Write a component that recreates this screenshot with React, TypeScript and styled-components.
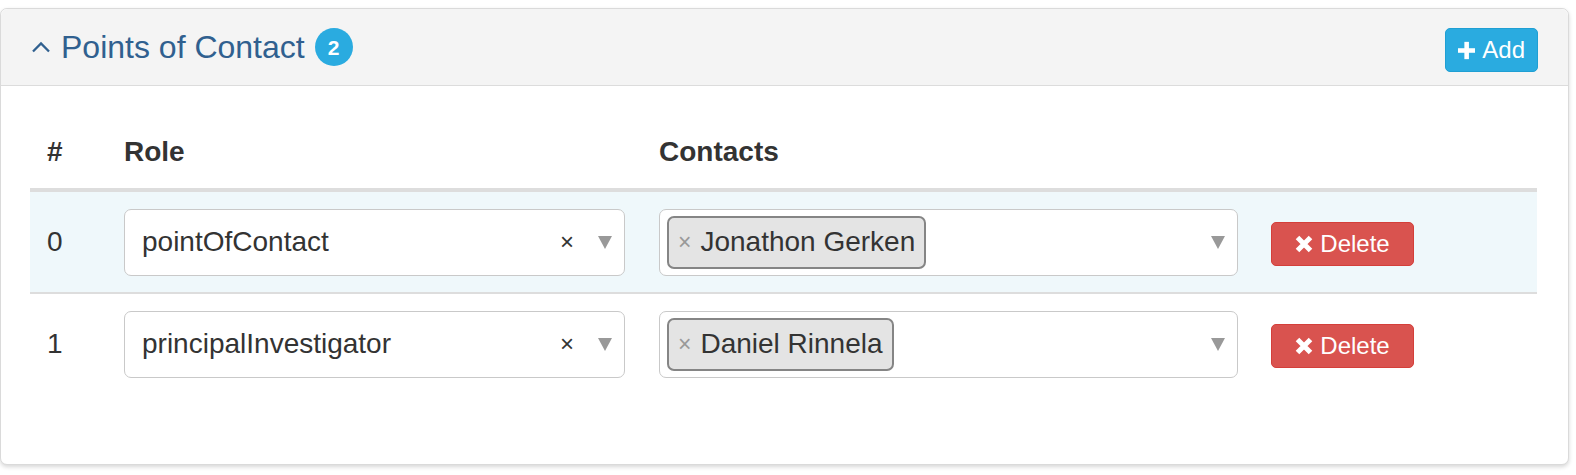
import React from "react";
import styled, { createGlobalStyle } from "styled-components";

const GlobalStyle = createGlobalStyle`
  html, body { margin: 0; padding: 0; background: #ffffff; }
  body { font-family: "Liberation Sans", Arial, Helvetica, sans-serif; color: #333333; }
  * { box-sizing: border-box; }
`;

const Page = styled.div`
  padding: 8px 0 12px 0;
`;

const Panel = styled.section`
  width: 1569px;
  background: #ffffff;
  border: 1px solid #dadada;
  border-radius: 7px;
  box-shadow: 0 2px 4px rgba(0, 0, 0, 0.16);
`;

const Heading = styled.header`
  height: 77px;
  display: flex;
  align-items: center;
  justify-content: space-between;
  padding: 0 30px 0 30px;
  background: #f4f4f4;
  border-bottom: 1px solid #dcdcdc;
  border-radius: 7px 7px 0 0;
`;

const Title = styled.h3`
  margin: 0;
  display: flex;
  align-items: center;
  font-size: 32px;
  font-weight: 400;
  color: #30608f;
  line-height: 1;
`;

const TitleText = styled.span`
  margin-left: 10px;
`;

const Badge = styled.span`
  display: inline-flex;
  align-items: center;
  justify-content: center;
  width: 38px;
  height: 38px;
  margin-left: 10px;
  border-radius: 50%;
  background: #2aabe0;
  color: #ffffff;
  font-size: 21px;
  font-weight: 700;
`;

const Button = styled.button<{ $variant: "info" | "danger" }>`
  display: inline-flex;
  align-items: center;
  justify-content: center;
  gap: 7px;
  height: 44px;
  padding: 0 12px;
  border-radius: 5px;
  font-family: "Liberation Sans", Arial, sans-serif;
  font-size: 24px;
  color: #ffffff;
  cursor: pointer;
  background: ${(p) => (p.$variant === "info" ? "#2aabe0" : "#d9534f")};
  border: 1.5px solid ${(p) => (p.$variant === "info" ? "#1f9fd3" : "#d43f3a")};
`;

const AddButton = styled(Button)`
  width: 93px;
  margin-top: 6px;
`;

const DeleteButton = styled(Button)`
  width: 143px;
  margin-top: 4px;
`;

const Body = styled.div`
  padding: 30px 31px 70px 29px;
`;

const Grid = styled.div`
  display: grid;
  grid-template-columns: 94px 535px 612px 1fr;
`;

const HeadRow = styled(Grid)`
  height: 76px;
  align-items: center;
  border-bottom: 4px solid #dddddd;
`;

const HeadCell = styled.div<{ $pad?: number }>`
  padding-left: ${(p) => p.$pad ?? 0}px;
  font-size: 28px;
  font-weight: 700;
  color: #333333;
`;

const Row = styled(Grid)<{ $striped: boolean; $first: boolean }>`
  height: ${(p) => (p.$first ? 100 : 102)}px;
  align-items: center;
  background: ${(p) => (p.$striped ? "#eff8fb" : "#ffffff")};
  border-top: ${(p) => (p.$first ? "0" : "2px solid #dddddd")};
`;

const IndexCell = styled.div`
  padding-left: 17px;
  font-size: 28px;
  color: #333333;
`;

const SelectBox = styled.div<{ $width: number }>`
  width: ${(p) => p.$width}px;
  height: 67px;
  display: flex;
  align-items: center;
  background: #ffffff;
  border: 1.5px solid #c9c9c9;
  border-radius: 7px;
`;

const SingleValue = styled.span`
  flex: 1;
  padding-left: 17px;
  font-size: 28px;
  color: #333333;
`;

const Clear = styled.span`
  font-size: 24px;
  color: #333333;
  margin-right: 24px;
  line-height: 1;
`;

const Arrow = styled.span`
  width: 0;
  height: 0;
  margin-right: 12px;
  border-left: 7px solid transparent;
  border-right: 7px solid transparent;
  border-top: 13px solid #999999;
`;

const MultiArea = styled.div`
  flex: 1;
  display: flex;
  align-items: center;
  padding-left: 7px;
`;

const Tag = styled.span`
  display: inline-flex;
  align-items: center;
  height: 53px;
  padding: 0 9px 0 9px;
  background: #e4e4e4;
  border: 2px solid #858585;
  border-radius: 7px;
  font-size: 28px;
  color: #333333;
`;

const TagRemove = styled.span`
  font-size: 23px;
  color: #999999;
  margin-right: 9px;
`;

const ChevronUp = () => (
  <svg width="20" height="12" viewBox="0 0 20 12" aria-hidden="true">
    <polyline points="2,10.5 10,2.5 18,10.5" fill="none" stroke="#30608f" strokeWidth="2.3" />
  </svg>
);

const PlusIcon = () => (
  <svg width="19" height="19" viewBox="0 0 19 19" aria-hidden="true">
    <rect x="7" y="0" width="5" height="19" fill="#ffffff" />
    <rect x="0" y="7" width="19" height="5" fill="#ffffff" />
  </svg>
);

const RemoveIcon = () => (
  <svg width="18" height="18" viewBox="0 0 18 18" aria-hidden="true">
    <path d="M2.5 2.5 L15.5 15.5 M15.5 2.5 L2.5 15.5" stroke="#ffffff" strokeWidth="5" strokeLinecap="butt" />
  </svg>
);

const rows = [
  { role: "pointOfContact", contact: "Jonathon Gerken" },
  { role: "principalInvestigator", contact: "Daniel Rinnela" },
];

export default function App() {
  return (
    <>
      <GlobalStyle />
      <Page>
        <Panel>
          <Heading>
            <Title>
              <ChevronUp />
              <TitleText>Points of Contact</TitleText>
              <Badge>{rows.length}</Badge>
            </Title>
            <AddButton $variant="info">
              <PlusIcon />
              Add
            </AddButton>
          </Heading>
          <Body>
            <HeadRow>
              <HeadCell $pad={17}>#</HeadCell>
              <HeadCell>Role</HeadCell>
              <HeadCell>Contacts</HeadCell>
              <HeadCell />
            </HeadRow>
            {rows.map((r, i) => (
              <Row key={i} $striped={i === 0} $first={i === 0}>
                <IndexCell>{i}</IndexCell>
                <div>
                  <SelectBox $width={501}>
                    <SingleValue>{r.role}</SingleValue>
                    <Clear>×</Clear>
                    <Arrow />
                  </SelectBox>
                </div>
                <div>
                  <SelectBox $width={579}>
                    <MultiArea>
                      <Tag>
                        <TagRemove>×</TagRemove>
                        {r.contact}
                      </Tag>
                    </MultiArea>
                    <Arrow />
                  </SelectBox>
                </div>
                <div>
                  <DeleteButton $variant="danger">
                    <RemoveIcon />
                    Delete
                  </DeleteButton>
                </div>
              </Row>
            ))}
          </Body>
        </Panel>
      </Page>
    </>
  );
}
